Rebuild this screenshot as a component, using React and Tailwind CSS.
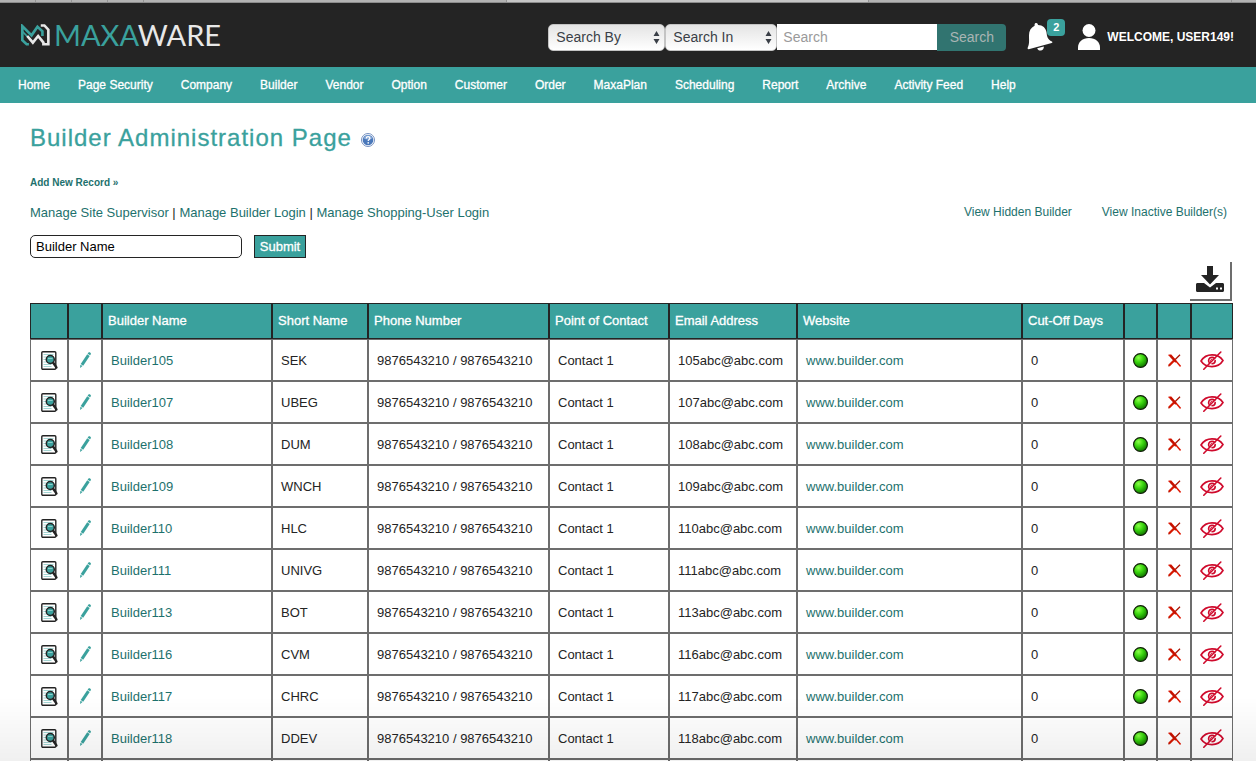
import React from "react";

const NAV = [
  "Home", "Page Security", "Company", "Builder", "Vendor", "Option", "Customer",
  "Order", "MaxaPlan", "Scheduling", "Report", "Archive", "Activity Feed", "Help",
];

const BUILDERS = [
  ["105", "SEK"], ["107", "UBEG"], ["108", "DUM"], ["109", "WNCH"], ["110", "HLC"],
  ["111", "UNIVG"], ["113", "BOT"], ["116", "CVM"], ["117", "CHRC"], ["118", "DDEV"],
];

const HEADERS = [
  "Builder Name", "Short Name", "Phone Number", "Point of Contact",
  "Email Address", "Website", "Cut-Off Days",
];

const COLUMN_COUNT = HEADERS.length + 5;

function LogoMark() {
  return (
    <svg viewBox="0 0 88 66" className="h-[22px] w-[29px]" fill="none" strokeWidth="8" aria-hidden="true">
      <path d="M24 61H17L4 49V6L32 34L50 8L65 22V36" stroke="#3aa19d" />
      <path d="M4 22L32 50" stroke="#3aa19d" strokeWidth="5" />
      <path d="M19 36L36 56L52 36L68 56V61H83V17L71 4H60" stroke="#e8e8e8" />
    </svg>
  );
}

function BellIcon() {
  return (
    <svg viewBox="0 0 26 28" className="h-7 w-[26px]" fill="#fff" aria-hidden="true">
      <path d="M7.600 1.300c.3-1.400 2.500-1.700 3.100-.3l.3.9c4.700.1 8 3.100 8.500 7.300.5 4.300 1 7 5.400 9.300.7.400.6 1.300-.2 1.500L1.700 26.200c-.8.2-1.500-.5-1.100-1.300C2.700 20.700 1.900 17.300 2 12.300c0-4.400 1.800-7.600 5.600-9.500z" />
      <path d="M10.200 25.200l6.600-1.800c.3 1.900-.8 3.600-2.700 4-1.700.4-3.400-.5-3.900-2.200z" />
    </svg>
  );
}

function UserIcon() {
  return (
    <svg viewBox="0 0 22 26" className="h-[26px] w-[22px]" fill="#fff" aria-hidden="true">
      <circle cx="11" cy="6.500" r="6.500" />
      <path d="M0 26v-2.500C0 18 4.500 14 11 14s11 4 11 9.500V26z" />
    </svg>
  );
}

function HelpIcon() {
  return (
    <svg viewBox="0 0 14 14" className="size-[14px]" aria-hidden="true">
      <circle cx="7" cy="7" r="6.500" fill="#fff" stroke="#7590c0" />
      <circle cx="7" cy="7" r="5.300" fill="#4a78ba" />
      <path d="M2.500 5.500a4.700 4.700 0 0 1 9 0c-3 1.400-6 1.400-9 0z" fill="#86a8d8" />
      <path d="M5.300 5.400c0-2.400 3.600-2.300 3.600-.1 0 1.200-1.700 1.300-1.700 2.700" fill="none" stroke="#fff" strokeWidth="1.300" />
      <circle cx="7.200" cy="9.900" r=".8" fill="#fff" />
    </svg>
  );
}

function DownloadIcon() {
  return (
    <svg viewBox="0 0 28 26" className="h-[26px] w-7" fill="#242424" aria-hidden="true">
      <path d="M11 0h6v9h6L14 18.500 5 9h6z" />
      <path fillRule="evenodd" d="M1.500 17H8l6 4.500 6-4.500h6.500c.9 0 1.500.6 1.500 1.500v6c0 .9-.6 1.500-1.500 1.500h-25C.6 26 0 25.400 0 24.500v-6C0 17.600.6 17 1.500 17zM20 21.500v2h2v-2zm4 0v2h2v-2z" />
    </svg>
  );
}

function ViewIcon() {
  return (
    <svg viewBox="0 0 17 19" className="h-[19px] w-[17px]" fill="none" aria-hidden="true">
      <rect x=".8" y=".8" width="14" height="17.400" rx="1" fill="#fff" stroke="#242424" strokeWidth="1.400" />
      <path d="M2.500 3.500h10M2.500 6h3M2.500 8.500h2.500M2.500 11h3M2.500 13.500h8M2.500 15.500h8" stroke="#a3d5d3" strokeWidth="1" />
      <circle cx="9.300" cy="8.500" r="4" fill="#3aa19d" stroke="#242424" strokeWidth="1.500" />
      <path d="M7 7.500h4.600" stroke="#8fcfcc" />
      <path d="M12.200 11.800l3.200 4.600" stroke="#242424" strokeWidth="2.400" strokeLinecap="round" />
    </svg>
  );
}

function PencilIcon() {
  return (
    <svg viewBox="0 0 11 16" className="h-4 w-[11px]" fill="#3aa19d" aria-hidden="true">
      <path d="M8.300.7c.9-1.300 3.300.2 2.500 1.600l-.7 1L7.600 1.700z" />
      <path d="M7.200 2.300l2.500 1.600-6.500 9.800-2.500-1.600z" />
      <path d="M.4 12.700l2.100 1.400L.1 15.900z" />
    </svg>
  );
}

function StatusIcon() {
  return (
    <svg viewBox="0 0 15 15" className="size-[15px]" aria-hidden="true">
      <defs>
        <radialGradient id="ball" cx=".36" cy=".3" r=".75">
          <stop offset="0" stopColor="#8dff4a" />
          <stop offset=".45" stopColor="#38d40d" />
          <stop offset="1" stopColor="#0f6a00" />
        </radialGradient>
      </defs>
      <circle cx="7.500" cy="7.500" r="6.900" fill="url(#ball)" stroke="#101c08" strokeWidth="1.200" />
    </svg>
  );
}

function DeleteIcon() {
  return (
    <svg viewBox="0 0 13 13" className="size-[13px]" fill="none" aria-hidden="true">
      <path d="M.5 12.200L12 .8" stroke="#a81200" strokeWidth="1.300" />
      <path d="M1 11.500L6 6.500" stroke="#d81800" strokeWidth="2.200" />
      <path d="M.5 1.200H3L12.600 12.400" stroke="#e01b06" strokeWidth="1.500" />
      <path d="M2 1.500L8 8" stroke="#c41200" strokeWidth="2" />
    </svg>
  );
}

function HideIcon() {
  return (
    <svg viewBox="0 0 24 19" className="h-[19px] w-6" fill="none" stroke="#cf0a2c" strokeWidth="1.600" strokeLinecap="round" aria-hidden="true">
      <path d="M1 10C3.500 6 7.500 3.900 12 3.900S20.500 5.800 23 9.500C20.500 13.600 16.500 15.600 12 15.600S3.500 13.800 1 10z" />
      <path d="M9.400 12C7.400 9.200 9.200 6.400 12 6.400c1.200 0 2 .4 2.700 1.100M15.200 9.500c0 1.900-1.300 3.200-3.200 3.200" />
      <path d="M11.800 8.300c-1.400.2-1.700 1-1.500 2" strokeWidth="1" />
      <path d="M3.800 18.200L20.800 1" />
    </svg>
  );
}

function Picker({ label, className }) {
  return (
    <div className={`relative h-[27px] ${className}`}>
      <select
        aria-label={label}
        className="size-full appearance-none rounded-[5px] border border-[#c4c4c4] bg-linear-to-b from-[#e4e4e4] to-white px-[7px] text-sm leading-5 text-[#3a3f47]"
      >
        <option>{label}</option>
      </select>
      <svg viewBox="0 0 7 13" className="pointer-events-none absolute top-[7px] right-[5px] h-[13px] w-[7px]" fill="#3a3f47" aria-hidden="true">
        <path d="M3.500 0L6.500 5H.5zM3.500 13L.5 8h6z" />
      </svg>
    </div>
  );
}

function IconCell({ label, children }) {
  return (
    <td className="border border-[#6d6d6d] p-0">
      <button type="button" aria-label={label} className="flex w-full items-center justify-center">
        {children}
      </button>
    </td>
  );
}

function Cell({ children }) {
  return <td className="border border-[#6d6d6d] px-2 pt-[2px] pb-0">{children}</td>;
}

export default function App() {
  return (
    <div className="min-h-screen bg-white font-['Liberation_Sans',Arial,sans-serif] text-[13px] leading-5 text-[#242424]">
      <div className="flex h-[3px] border-b border-[#8c8c8c] bg-[#b3b3b3]">
        <div className="w-9 border-r border-[#949494]" />
        <div className="w-9 border-r border-[#949494]" />
        <div className="w-9 border-r border-[#949494]" />
        <div className="w-9 border-r border-[#949494]" />
        <div className="ml-[362px] w-[363px] border-x border-[#949494] bg-[#c6c6c6]" />
        <div className="w-[363px] border-r border-[#949494]" />
      </div>

      <header className="flex h-16 items-center justify-between bg-[#242424] pr-[22px] pl-[21px]">
        <a href="#home" className="flex items-center gap-1 text-[29px] leading-8 text-[#e8e8e8]">
          <LogoMark />
          <span className="font-['Lato',sans-serif]">
            <span className="text-[#3aa19d]">MAXA</span>WARE
          </span>
        </a>
        <div className="flex items-center">
          <form className="flex items-start pt-1" onSubmit={(e) => e.preventDefault()}>
            <Picker label="Search By" className="w-[117px]" />
            <Picker label="Search In" className="w-[112px]" />
            <input
              type="text"
              aria-label="Search"
              placeholder="Search"
              className="h-[26px] w-40 bg-white px-1.5 text-sm text-black placeholder:text-[#9a9a9a]"
            />
            <button type="submit" className="h-[27px] w-[69px] rounded-r-[4px] bg-[#317470] text-sm text-[#a9b5b4]">
              Search
            </button>
          </form>
          <button type="button" aria-label="Notifications" className="relative ml-[21px] w-[38px] pt-1">
            <BellIcon />
            <span className="absolute top-0 right-0 h-[17px] w-[18px] rounded-[4px] bg-[#3aa19d] text-[11px] leading-[17px] font-bold text-white">
              2
            </span>
          </button>
          <a href="#account" className="ml-[13px] flex items-center gap-[7px] pt-1 text-xs font-bold text-white">
            <UserIcon />
            WELCOME, USER149!
          </a>
        </div>
      </header>

      <nav className="flex h-9 items-center bg-[#3aa19d] pl-1 text-xs text-white [-webkit-text-stroke:0.3px_white]">
        {NAV.map((item) => (
          <a key={item} href={`#${item}`} className="px-[14px]">{item}</a>
        ))}
      </nav>

      <main className="pr-[23px] pl-[30px]">
        <div className="flex items-center gap-[9px] pt-5">
          <h1 className="text-2xl leading-[30px] tracking-[1px] text-[#3aa19d] [-webkit-text-stroke:0.3px_#3aa19d]">
            Builder Administration Page
          </h1>
          <button type="button" aria-label="Help" className="pt-1">
            <HelpIcon />
          </button>
        </div>
        <a href="#add" className="mt-5 block text-[10px] font-bold text-[#1d716d]">Add New Record »</a>
        <div className="mt-[10px] flex items-start justify-between text-[#1d716d]">
          <div className="text-[#242424]">
            <a href="#supervisor" className="text-[#1d716d]">Manage Site Supervisor</a> |{" "}
            <a href="#login" className="text-[#1d716d]">Manage Builder Login</a> |{" "}
            <a href="#shopping" className="text-[#1d716d]">Manage Shopping-User Login</a>
          </div>
          <div className="flex gap-[30px] pr-1.5 text-xs leading-[18px]">
            <a href="#hidden">View Hidden Builder</a>
            <a href="#inactive">View Inactive Builder(s)</a>
          </div>
        </div>
        <form className="mt-3 flex gap-3" onSubmit={(e) => e.preventDefault()}>
          <input
            type="text"
            aria-label="Builder Name"
            defaultValue="Builder Name"
            className="h-[23px] w-[212px] rounded-[5px] border border-[#242424] bg-white px-[5px] text-black"
          />
          <button
            type="submit"
            className="flex h-[23px] w-[52px] items-center justify-center border border-[#242424] bg-[#3aa19d] text-white [-webkit-text-stroke:0.3px_white]"
          >
            Submit
          </button>
        </form>
        <div className="mt-1 mb-[2px] flex justify-end pr-[1px]">
          <button
            type="button"
            aria-label="Download"
            className="flex h-[39px] w-[42px] items-center justify-center border-r-2 border-b-2 border-[#6d6d6d] pb-1"
          >
            <DownloadIcon />
          </button>
        </div>

        <table className="w-full table-fixed border-separate border-spacing-0">
          <colgroup>
            <col className="w-[38px]" />
            <col className="w-[34px]" />
            <col className="w-[170px]" />
            <col className="w-24" />
            <col className="w-[181px]" />
            <col className="w-[120px]" />
            <col className="w-32" />
            <col />
            <col className="w-[102px]" />
            <col className="w-[33px]" />
            <col className="w-[34px]" />
            <col className="w-[42px]" />
          </colgroup>
          <thead>
            <tr className="h-9 bg-[#3aa19d] text-left text-white [-webkit-text-stroke:0.3px_white]">
              {["view", "edit"].map((k) => (
                <th key={k} className="border border-[#242424]" />
              ))}
              {HEADERS.map((h) => (
                <th key={h} className="border border-[#242424] px-[5px] py-0 font-normal">{h}</th>
              ))}
              {["status", "delete", "hide"].map((k) => (
                <th key={k} className="border border-[#242424]" />
              ))}
            </tr>
          </thead>
          <tbody>
            {BUILDERS.map(([num, short]) => (
              <tr key={num} className="h-[42px]">
                <IconCell label="View record"><ViewIcon /></IconCell>
                <IconCell label="Edit record"><PencilIcon /></IconCell>
                <Cell><a href={`#builder${num}`} className="text-[#1d716d]">Builder{num}</a></Cell>
                <Cell>{short}</Cell>
                <Cell>9876543210 / 9876543210</Cell>
                <Cell>Contact 1</Cell>
                <Cell>{num}abc@abc.com</Cell>
                <Cell><a href="#website" className="text-[#1d716d]">www.builder.com</a></Cell>
                <Cell>0</Cell>
                <IconCell label="Active"><StatusIcon /></IconCell>
                <IconCell label="Delete record"><DeleteIcon /></IconCell>
                <IconCell label="Hide record"><HideIcon /></IconCell>
              </tr>
            ))}
            <tr className="h-[2px]" aria-hidden="true">
              {Array.from({ length: COLUMN_COUNT }, (_, i) => (
                <td key={i} className="border border-b-0 border-[#6d6d6d] p-0" />
              ))}
            </tr>
          </tbody>
        </table>
      </main>
      <div className="pointer-events-none fixed inset-x-0 bottom-0 h-16 bg-linear-to-b from-transparent to-black/6" />
    </div>
  );
}
